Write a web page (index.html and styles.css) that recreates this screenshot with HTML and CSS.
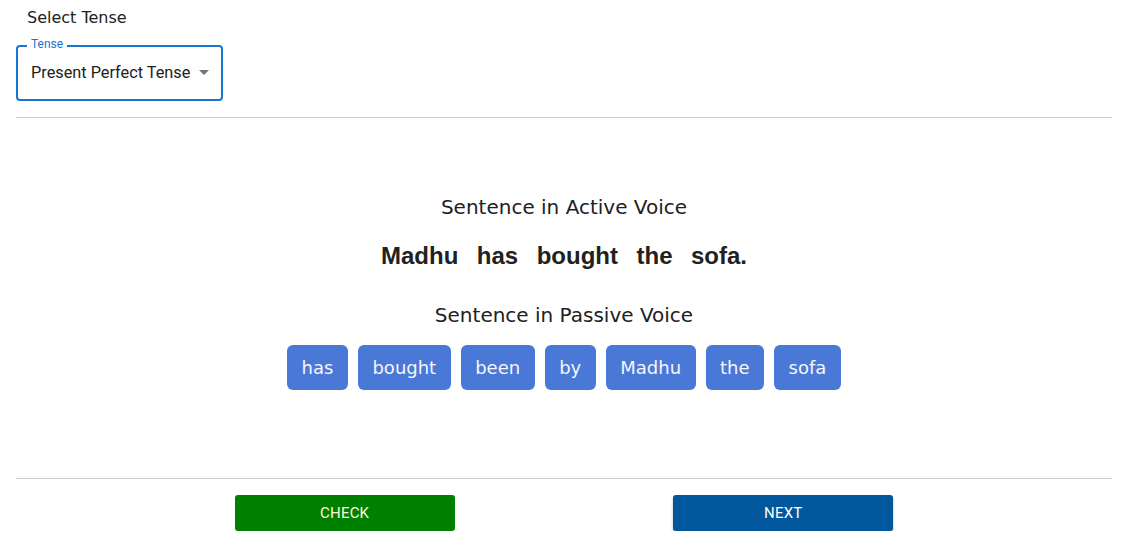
FILE: index.html
```html
<!DOCTYPE html>
<html lang="en">
<head>
<meta charset="utf-8">
<title>Active Passive</title>
<link rel="stylesheet" href="styles.css">
</head>
<body>
<div class="page">
  <div class="title">Select Tense</div>
  <div class="select">
    <span class="select-label">Tense</span>
    <span class="select-value">Present Perfect Tense</span>
    <svg class="select-arrow" width="10" height="5" viewBox="0 0 10 5"><path d="M0 0h10L5 5z" fill="#757575"/></svg>
  </div>
  <hr class="divider">
  <div class="main">
    <div class="heading">Sentence in Active Voice</div>
    <div class="sentence"><span>Madhu</span><span>has</span><span>bought</span><span>the</span><span>sofa.</span></div>
    <div class="heading heading-passive">Sentence in Passive Voice</div>
    <div class="chips">
      <button class="chip">has</button>
      <button class="chip">bought</button>
      <button class="chip">been</button>
      <button class="chip">by</button>
      <button class="chip">Madhu</button>
      <button class="chip">the</button>
      <button class="chip">sofa</button>
    </div>
  </div>
  <hr class="divider divider-bottom">
  <div class="actions">
    <button class="btn btn-check">CHECK</button>
    <button class="btn btn-next">NEXT</button>
  </div>
</div>
</body>
</html>
```
FILE: styles.css
```css
html, body {
  margin: 0;
  padding: 0;
  background: #fff;
  overflow: hidden;
}
.page {
  padding: 0 10px 0 16px;
  color: #212121;
}
.title {
  font-family: "DejaVu Sans", sans-serif;
  font-size: 16px;
  line-height: 19px;
  padding: 8px 11px 0;
  color: #212121;
}
.select {
  position: relative;
  margin-top: 18px;
  width: 207px;
  height: 56px;
  box-sizing: border-box;
  border: 2px solid #1976d2;
  border-radius: 4px;
  display: flex;
  align-items: center;
  padding-left: 13px;
  padding-bottom: 2px;
  font-family: Roboto, "Liberation Sans", sans-serif;
}
.select-label {
  position: absolute;
  top: -10px;
  left: 9px;
  padding: 0 4px;
  background: #fff;
  font-size: 12px;
  line-height: 14px;
  color: #1976d2;
}
.select-value {
  font-size: 16.3px;
  color: #212121;
}
.select-arrow {
  margin-left: 9px;
  margin-top: 1px;
}
.divider {
  margin: 16px 0 0;
  border: 0;
  border-top: 1px solid #cfcfcf;
  height: 0;
}
.divider-bottom {
  margin-top: 0;
}
.main {
  padding: 77px 0 88px;
  display: flex;
  flex-direction: column;
  align-items: center;
  font-family: "DejaVu Sans", sans-serif;
}
.heading {
  font-size: 20px;
  line-height: 24px;
  color: #212121;
}
.sentence {
  margin-top: 23px;
  font-family: "Liberation Sans", Arial, sans-serif;
  font-weight: bold;
  font-size: 24px;
  line-height: 28px;
  display: flex;
  gap: 18.5px;
  color: #212121;
}
.heading-passive {
  margin-top: 33px;
}
.chips {
  margin-top: 18px;
  display: flex;
  gap: 10px;
}
.chip {
  height: 45px;
  padding: 0 14.5px;
  border: 0;
  border-radius: 6px;
  background: #4a78d7;
  color: #f4f6fb;
  font-family: "DejaVu Sans", sans-serif;
  font-size: 18px;
}
.actions {
  margin-top: 16px;
  display: flex;
  justify-content: space-evenly;
}
.btn {
  width: 220px;
  height: 36px;
  border: 0;
  border-radius: 3px;
  font-family: Roboto, "Liberation Sans", sans-serif;
  font-size: 15px;
  font-weight: 400;
  letter-spacing: 0.2px;
}
.btn-check {
  background: #008000;
  color: #fbfbd8;
}
.btn-next {
  background: #01579b;
  color: #fff;
  box-shadow: 0 2px 3px rgba(0,0,0,0.25), 0 1px 1px rgba(0,0,0,0.14);
}
```
